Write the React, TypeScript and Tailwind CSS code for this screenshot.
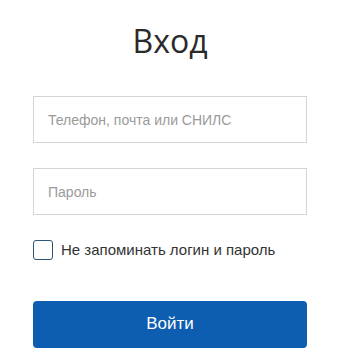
import React from 'react';

export default function App() {
  return (
    <div className="w-[347px] h-[364px] bg-white" style={{ fontFamily: '"Liberation Sans", Arial, sans-serif' }}>
      <div className="ml-[33px] w-[274px] pt-[19px] flex flex-col">
        <h1 className="text-center text-[32px] leading-[44px] text-[#2a2a2a] font-['Open_Sans',sans-serif]">Вход</h1>
        <input
          type="text"
          placeholder="Телефон, почта или СНИЛС"
          className="mt-[33px] h-[47px] w-full border border-[#d5d5d5] px-[14px] text-[14px] text-[#333] placeholder:text-[#9a9a9a] outline-none"
        />
        <input
          type="password"
          placeholder="Пароль"
          className="mt-[25px] h-[47px] w-full border border-[#d5d5d5] px-[14px] text-[14px] text-[#333] placeholder:text-[#9a9a9a] outline-none"
        />
        <label className="mt-[24px] flex items-center gap-[8px]">
          <span className="w-[20px] h-[20px] rounded-[3px] border border-[#2f5373] bg-white" />
          <span className="text-[15px] text-[#333333]">Не запоминать логин и пароль</span>
        </label>
        <button className="mt-[39px] h-[47px] w-full rounded-[4px] bg-[#0d5db0] text-white text-[17px]">
          Войти
        </button>
      </div>
    </div>
  );
}
